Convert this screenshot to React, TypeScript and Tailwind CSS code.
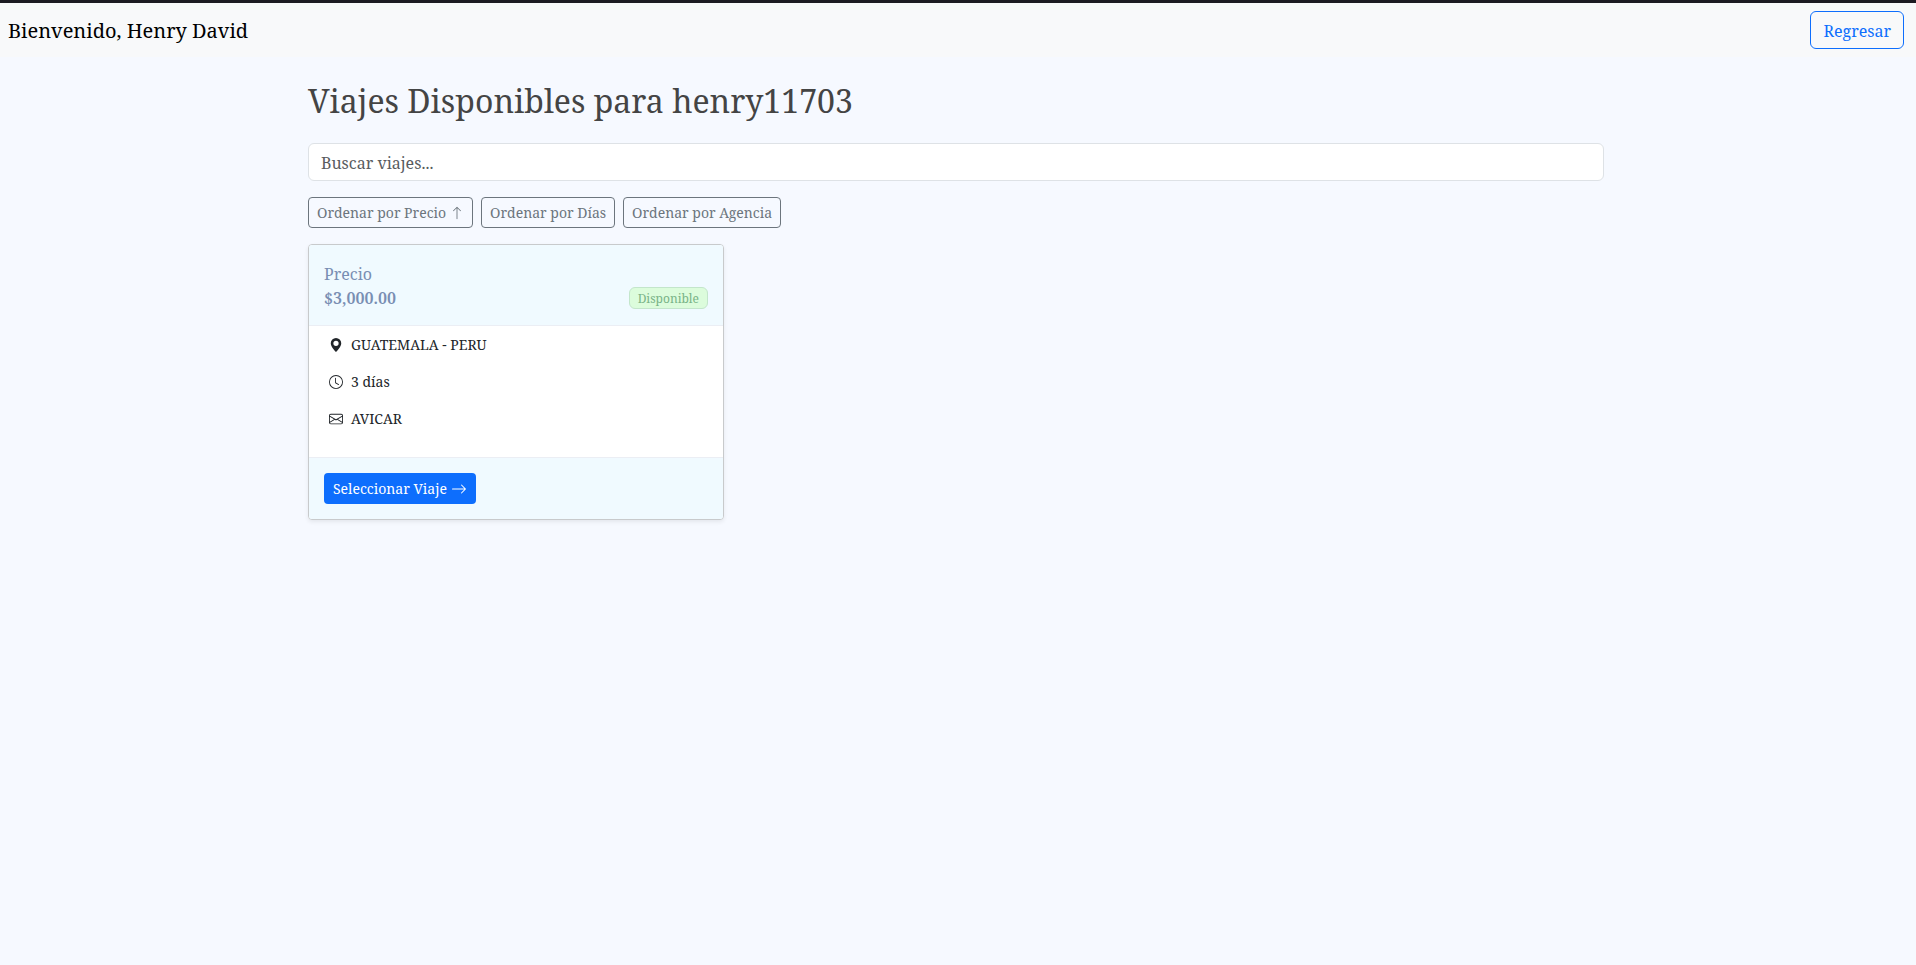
import { useState } from "react";
import { BsArrowRight, BsArrowUp, BsClock, BsEnvelope, BsGeoAltFill } from "react-icons/bs";

const trips = [
  { price: "$3,000.00", status: "Disponible", route: "GUATEMALA - PERU", days: "3 días", agency: "AVICAR" },
];

const sortButton =
  "inline-flex h-[31px] items-center gap-1 rounded border border-[#6c757d] px-2 text-sm text-[#6c757d] hover:bg-[#6c757d] hover:text-white";

export default function App() {
  const [query, setQuery] = useState("");
  const visible = trips.filter((t) => (t.route + " " + t.agency).toLowerCase().includes(query.toLowerCase()));

  return (
    <div className="min-h-screen border-t-[3px] border-[#1c1b22] bg-[#f6f9ff] font-['Noto_Serif',serif] text-base text-[#212529]">
      <nav className="flex items-center justify-between bg-[#f8f9fa] py-2 pr-3 pl-2">
        <span className="pt-0.5 text-xl leading-[30px] text-black">Bienvenido, Henry David</span>
        <a
          href="#"
          className="rounded-md border border-[#0d6efd] px-3 pt-[7px] pb-[5px] leading-6 text-[#0d6efd] hover:bg-[#0d6efd] hover:text-white"
        >
          Regresar
        </a>
      </nav>

      <div className="pr-1">
        <main className="mx-auto max-w-[1320px] px-3 pt-6">
          <h2 className="mb-[22px] text-[32px] leading-10 text-[#444444]">Viajes Disponibles para henry11703</h2>

          <input
            type="text"
            aria-label="Buscar viajes"
            placeholder="Buscar viajes..."
            value={query}
            onChange={(e) => setQuery(e.target.value)}
            className="block h-[38px] w-full rounded-md border border-[#dee2e6] bg-white px-3 pt-0.5 placeholder:text-[#595c5f]"
          />

          <div className="mt-4 flex flex-wrap gap-2">
            <button type="button" className={sortButton}>
              Ordenar por Precio <BsArrowUp className="size-3.5" />
            </button>
            <button type="button" className={sortButton}>Ordenar por Días</button>
            <button type="button" className={sortButton}>Ordenar por Agencia</button>
          </div>

          <div className="mt-4 grid grid-cols-1 gap-6 md:grid-cols-2 lg:grid-cols-3">
            {visible.map((t) => (
              <article
                key={t.route}
                className="overflow-hidden rounded border border-[#c8cacc] bg-white shadow-[0_2px_4px_rgba(0,0,0,0.075)]"
              >
                <header className="flex items-end justify-between border-b border-[#ebeef4] bg-[#f0faff] px-[15px] pt-[17px] pb-[15px] text-[#798eb3]">
                  <div>
                    <p>Precio</p>
                    <p className="font-semibold">{t.price}</p>
                  </div>
                  <span className="mb-px rounded-md border border-[#c3e6cb] bg-[#dcfcdc] px-2 pt-0.5 text-xs leading-[18px] text-[#79b387]">
                    {t.status}
                  </span>
                </header>
                <ul className="px-5 pb-5 text-sm">
                  <li className="flex h-[37px] items-center gap-2">
                    <BsGeoAltFill className="size-3.5" /> {t.route}
                  </li>
                  <li className="flex h-[37px] items-center gap-2">
                    <BsClock className="size-3.5" /> {t.days}
                  </li>
                  <li className="flex h-[37px] items-center gap-2">
                    <BsEnvelope className="size-3.5" /> {t.agency}
                  </li>
                </ul>
                <footer className="border-t border-[#ebeef4] bg-[#f0faff] p-[15px]">
                  <button
                    type="button"
                    className="flex h-[31px] items-center gap-1 rounded-sm bg-[#0d6efd] px-[9px] text-sm text-white hover:bg-[#0b5ed7]"
                  >
                    Seleccionar Viaje <BsArrowRight className="size-4" />
                  </button>
                </footer>
              </article>
            ))}
          </div>
        </main>
      </div>
    </div>
  );
}
